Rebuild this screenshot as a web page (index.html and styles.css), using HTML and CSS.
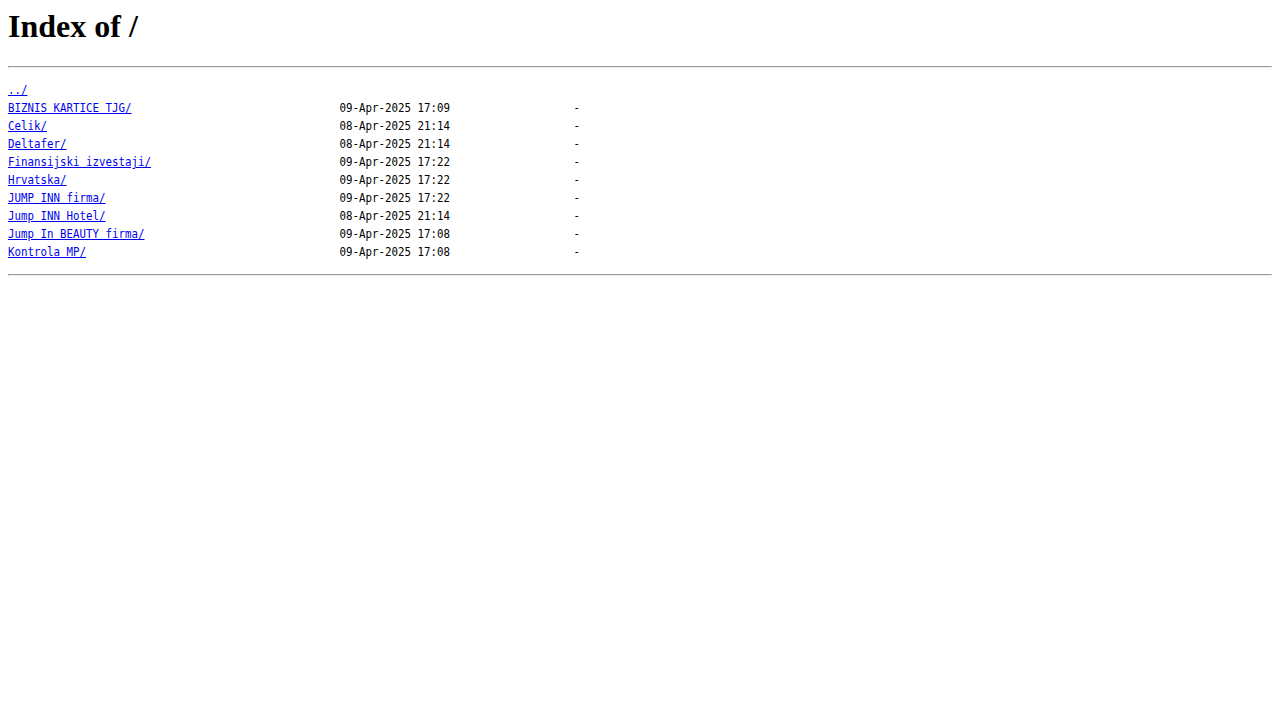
FILE: index.html
```html
<!DOCTYPE html>
<html lang="en">

<head>
    <meta charset="UTF-8">
    <title>Index of /</title>
    <link rel="stylesheet" href="styles.css">
</head>

<body>
    <h1>Index of /</h1>
    <hr>
    <pre class="listing"><div class="row"><a href="../">../</a></div><div class="row"><a href="#">BIZNIS KARTICE TJG/</a><span>09-Apr-2025 17:09</span><span class="size">-</span></div><div class="row"><a href="#">Celik/</a><span>08-Apr-2025 21:14</span><span class="size">-</span></div><div class="row"><a href="#">Deltafer/</a><span>08-Apr-2025 21:14</span><span class="size">-</span></div><div class="row"><a href="#">Finansijski izvestaji/</a><span>09-Apr-2025 17:22</span><span class="size">-</span></div><div class="row"><a href="#">Hrvatska/</a><span>09-Apr-2025 17:22</span><span class="size">-</span></div><div class="row"><a href="#">JUMP INN firma/</a><span>09-Apr-2025 17:22</span><span class="size">-</span></div><div class="row"><a href="#">Jump INN Hotel/</a><span>08-Apr-2025 21:14</span><span class="size">-</span></div><div class="row"><a href="#">Jump In BEAUTY firma/</a><span>09-Apr-2025 17:08</span><span class="size">-</span></div><div class="row"><a href="#">Kontrola MP/</a><span>09-Apr-2025 17:08</span><span class="size">-</span></div></pre>
    <hr>
</body>

</html>
```
FILE: styles.css
```css
body {
    font-family: "Liberation Serif", serif;
    margin: 8px;
    background-color: #fff;
    color: #000;
}

h1 {
    font-size: 32px;
    margin: 0 0 21.44px;
}

hr {
    margin: 8px 0;
}

.listing {
    font-family: "DejaVu Sans Mono", monospace;
    font-size: 13px;
    line-height: 18px;
    margin: 13px 0;
    transform: scaleX(0.8305);
    transform-origin: left top;
}

.row {
    display: grid;
    grid-template-columns: 51ch 17ch 20ch;
    height: 18px;
}

.listing a {
    color: #0000ee;
    justify-self: start;
}

.size {
    text-align: right;
}
```
